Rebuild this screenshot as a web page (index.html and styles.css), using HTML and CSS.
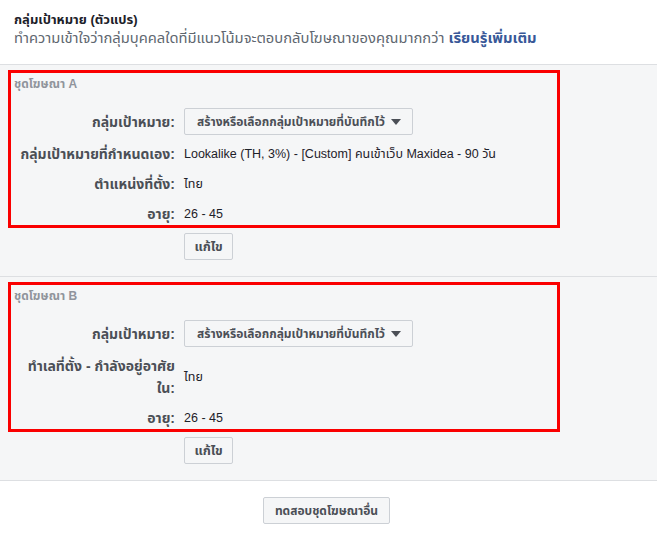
FILE: index.html
```html
<!DOCTYPE html>
<html lang="th">
<head>
<meta charset="utf-8">
<link rel="stylesheet" href="styles.css">
</head>
<body>
<div class="header">
  <div class="title">กลุ่มเป้าหมาย (ตัวแปร)</div>
  <div class="desc">ทำความเข้าใจว่ากลุ่มบุคคลใดที่มีแนวโน้มจะตอบกลับโฆษณาของคุณมากกว่า <a class="link" href="#">เรียนรู้เพิ่มเติม</a></div>
</div>

<div class="section">
  <div class="mark">
    <div class="set-label">ชุดโฆษณา A</div>
    <div class="row">
      <div class="label">กลุ่มเป้าหมาย:</div>
      <div class="value"><button class="dropdown">สร้างหรือเลือกกลุ่มเป้าหมายที่บันทึกไว้ <span class="caret"></span></button></div>
    </div>
    <div class="row">
      <div class="label">กลุ่มเป้าหมายที่กำหนดเอง:</div>
      <div class="value">Lookalike (TH, 3%) - [Custom] คนเข้าเว็บ Maxidea - 90 วัน</div>
    </div>
    <div class="row">
      <div class="label">ตำแหน่งที่ตั้ง:</div>
      <div class="value">ไทย</div>
    </div>
    <div class="row last">
      <div class="label">อายุ:</div>
      <div class="value">26 - 45</div>
    </div>
  </div>
  <div class="actions"><button class="btn btn-edit">แก้ไข</button></div>
</div>

<div class="section">
  <div class="mark">
    <div class="set-label">ชุดโฆษณา B</div>
    <div class="row">
      <div class="label">กลุ่มเป้าหมาย:</div>
      <div class="value"><button class="dropdown">สร้างหรือเลือกกลุ่มเป้าหมายที่บันทึกไว้ <span class="caret"></span></button></div>
    </div>
    <div class="row">
      <div class="label">ทำเลที่ตั้ง - กำลังอยู่อาศัย ใน:</div>
      <div class="value">ไทย</div>
    </div>
    <div class="row last">
      <div class="label">อายุ:</div>
      <div class="value">26 - 45</div>
    </div>
  </div>
  <div class="actions"><button class="btn btn-edit">แก้ไข</button></div>
</div>

<div class="footer"><button class="btn btn-wide">ทดสอบชุดโฆษณาอื่น</button></div>
</body>
</html>
```
FILE: styles.css
```css
* { box-sizing: border-box; }
body {
  margin: 0;
  background: #fff;
  font-family: "Liberation Sans", "Noto Sans Thai", "Noto Sans", sans-serif;
  font-size: 12px;
  color: #1d2129;
}
.header {
  padding: 10px 14px 0;
  height: 65px;
  border-bottom: 1px solid #dddfe2;
}
.title {
  font-weight: bold;
  font-size: 13px;
  line-height: 19px;
  color: #1d2129;
}
.desc {
  font-size: 14.75px;
  line-height: 19px;
  color: #606770;
  white-space: nowrap;
}
.link {
  color: #385898;
  font-weight: bold;
  text-decoration: none;
}
.section {
  background: #f5f6f7;
  border-bottom: 1px solid #dddfe2;
  padding: 5px 97px 16px 8px;
}
.mark {
  border: 3px solid #fa0000;
}
.set-label {
  padding-left: 3px;
  font-size: 12px;
  font-weight: bold;
  color: #90949c;
  line-height: 22px;
  margin-bottom: 9px;
}
.row {
  display: flex;
  align-items: center;
  padding: 4px 0;
}
.row.last { padding-bottom: 0; }
.label {
  width: 164px;
  flex: none;
  text-align: right;
  font-size: 14px;
  font-weight: bold;
  color: #4b4f56;
  line-height: 22px;
}
.value {
  margin-left: 9px;
  font-size: 12.5px;
  line-height: 22px;
  color: #1d2129;
}
.dropdown {
  display: flex;
  align-items: center;
  height: 27px;
  width: 229px;
  padding: 0 0 0 12px;
  border: 1px solid #ccd0d5;
  border-radius: 2px;
  background: #f5f6f7;
  font-family: "Noto Sans Thai", "Liberation Sans", sans-serif;
  font-size: 12px;
  font-weight: bold;
  color: #4b4f56;
  white-space: nowrap;
}
.caret {
  display: inline-block;
  width: 0;
  height: 0;
  margin-left: 6px;
  border-left: 5px solid transparent;
  border-right: 5px solid transparent;
  border-top: 6px solid #4b4f56;
}
.actions {
  padding-left: 176px;
  margin-top: 5px;
}
.btn {
  height: 27px;
  padding: 0;
  border: 1px solid #ccd0d5;
  border-radius: 2px;
  background: #f5f6f7;
  font-family: "Noto Sans Thai", "Liberation Sans", sans-serif;
  font-size: 12px;
  font-weight: bold;
  color: #4b4f56;
}
.btn-edit { width: 49px; font-size: 13px; }
.footer {
  display: flex;
  justify-content: center;
  padding-top: 16px;
  padding-right: 4px;
}
.btn-wide { width: 127px; }
```
